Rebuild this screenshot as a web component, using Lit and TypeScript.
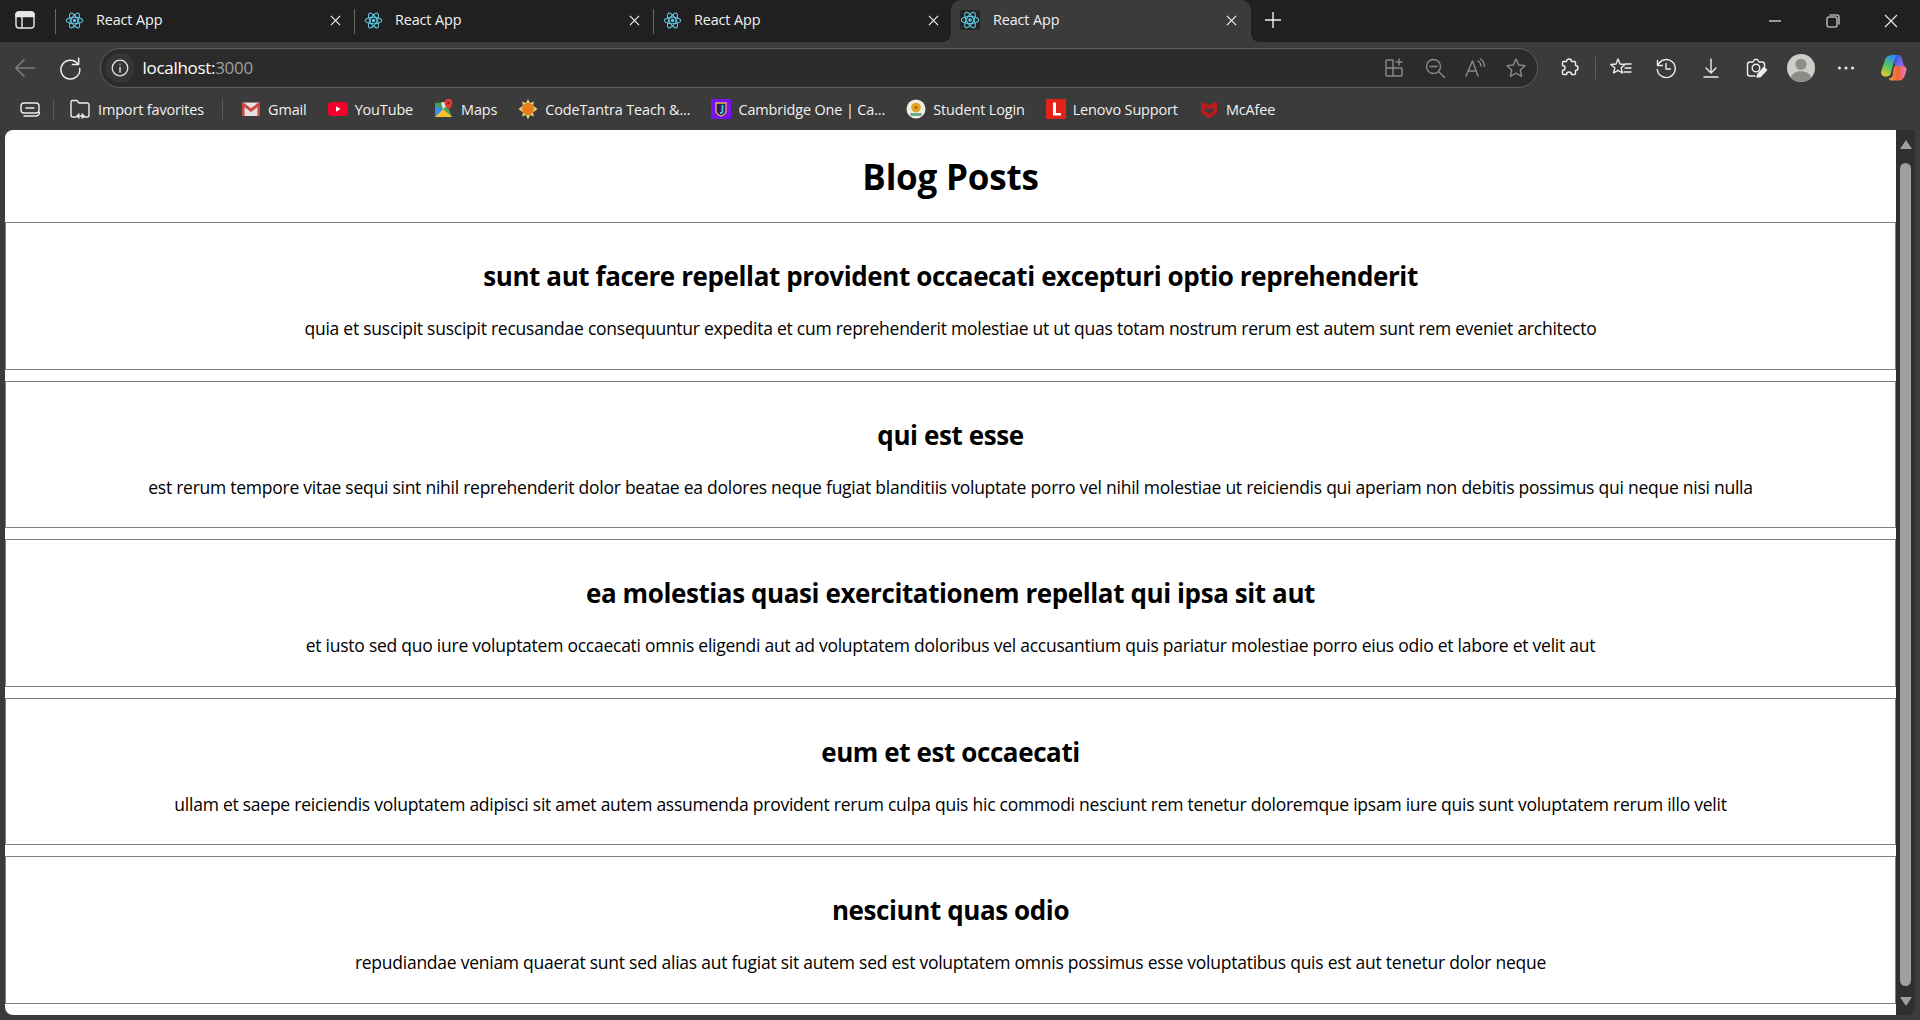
import { LitElement, html, css, svg } from "lit";
import { customElement } from "lit/decorators.js";

const reactIcon = html`<svg class="fav" viewBox="0 0 24 24" fill="none" stroke="#61c8e4" stroke-width="1.3"><circle cx="12" cy="12" r="2.1" fill="#61c8e4" stroke="none"/><ellipse cx="12" cy="12" rx="10.5" ry="4.2"/><ellipse cx="12" cy="12" rx="10.5" ry="4.2" transform="rotate(60 12 12)"/><ellipse cx="12" cy="12" rx="10.5" ry="4.2" transform="rotate(120 12 12)"/></svg>`;

const x = html`<svg class="close" viewBox="0 0 12 12" stroke="#f0f0f0" stroke-width="1.3" fill="none"><path d="M1 1l10 10M11 1L1 11"/></svg>`;

const ic = (body: unknown, stroke = "#e8e8e8", size = 24) =>
  html`<svg width=${size} height=${size} viewBox="0 0 24 24" fill="none" stroke=${stroke} stroke-width="1.4" stroke-linecap="round" stroke-linejoin="round">${body}</svg>`;

const tabs = [0, 1, 2];
const posts = [
  ["sunt aut facere repellat provident occaecati excepturi optio reprehenderit", "quia et suscipit suscipit recusandae consequuntur expedita et cum reprehenderit molestiae ut ut quas totam nostrum rerum est autem sunt rem eveniet architecto"],
  ["qui est esse", "est rerum tempore vitae sequi sint nihil reprehenderit dolor beatae ea dolores neque fugiat blanditiis voluptate porro vel nihil molestiae ut reiciendis qui aperiam non debitis possimus qui neque nisi nulla"],
  ["ea molestias quasi exercitationem repellat qui ipsa sit aut", "et iusto sed quo iure voluptatem occaecati omnis eligendi aut ad voluptatem doloribus vel accusantium quis pariatur molestiae porro eius odio et labore et velit aut"],
  ["eum et est occaecati", "ullam et saepe reiciendis voluptatem adipisci sit amet autem assumenda provident rerum culpa quis hic commodi nesciunt rem tenetur doloremque ipsam iure quis sunt voluptatem rerum illo velit"],
  ["nesciunt quas odio", "repudiandae veniam quaerat sunt sed alias aut fugiat sit autem sed est voluptatem omnis possimus esse voluptatibus quis est aut tenetur dolor neque"],
];

const bookmarks = [
  { label: "Gmail", icon: html`<svg class="bm" viewBox="0 0 20 20"><rect x="1" y="3.500" width="18" height="13.500" rx="1" fill="#e6dfdc"/><path d="M1 4.500V17h2.500V8l6.500 5 6.500-5v9H19V4.500L17.500 3.500 10 9.500 2.500 3.500z" fill="#c9473f"/></svg>` },
  { label: "YouTube", icon: html`<svg class="bm" viewBox="0 0 20 20"><rect x="0" y="3" width="20" height="14" rx="4" fill="#f5002d"/><path d="M8 7.200l4.600 2.800L8 12.800z" fill="#fff"/></svg>` },
  { label: "Maps", icon: html`<svg class="bm" viewBox="0 0 20 20"><path d="M1 4l11-1 6 15-17 0z" fill="#43a855"/><path d="M1 18l8-8 9 8z" fill="#fbc02d"/><path d="M1 7l8 3-8 8z" fill="#4285f4"/><path d="M1 4h6l2 6-8-3z" fill="#3f9f50"/><path d="M7 3.500l5-.5 1 4-4 3z" fill="#e4e4e4"/><path d="M14.500 0a4 4 0 0 1 4 4c0 2.800-4 6.800-4 6.800s-4-4-4-6.800a4 4 0 0 1 4-4z" fill="#de3d34"/><circle cx="14.500" cy="4" r="1.300" fill="#8f1f1a"/></svg>` },
  { label: "CodeTantra Teach &...", icon: html`<svg class="bm" viewBox="0 0 20 20"><path d="M10 0l2 4 4-1.500L15 6.500l4.500 3.500-4.500 3.500 1 4-4-1.500-2 4.500-2-4.500-4 1.500 1-4L.5 10 5 6.500 4 2.500 8 4z" fill="#e2cf7c"/><circle cx="10" cy="10" r="6" fill="#e67e1a"/></svg>` },
  { label: "Cambridge One | Ca...", icon: html`<svg class="bm" viewBox="0 0 20 20"><rect width="20" height="20" fill="#7a12f0"/><path d="M5 4h10v8c0 2.500-2.500 4-5 5-2.500-1-5-2.500-5-5z" fill="#2a2060" stroke="#e9b44a" stroke-width="1.300"/><path d="M11.500 6v6.500c0 1-1 1.500-2.500 1.500" fill="none" stroke="#4fc3e8" stroke-width="1.800"/></svg>` },
  { label: "Student Login", icon: html`<svg class="bm" viewBox="0 0 20 20"><circle cx="10" cy="10" r="9.500" fill="#efeee4"/><circle cx="10" cy="8.500" r="4.800" fill="#e5a323"/><circle cx="10" cy="8.500" r="1.400" fill="#a8641a"/><path d="M4 14h12l-1 3H5z" fill="#6aa88a"/></svg>` },
  { label: "Lenovo Support", icon: html`<svg class="bm" viewBox="0 0 20 20"><rect width="20" height="20" fill="#e2231a"/><path d="M7 3.500h3V14h5v2.500H7z" fill="#fff"/></svg>` },
  { label: "McAfee", icon: html`<svg class="bm" viewBox="0 0 20 20"><path d="M2 2.500l8 3.500 8-3.500V14l-8 5.500L2 14z" fill="#b71c1c"/><path d="M6 8.500l4 2 4-2v3.500l-4 2.500L6 12z" fill="#3b3b3b"/></svg>` },
];

@customElement("app-root")
export class AppRoot extends LitElement {
  static styles = css`
    :host { display: flex; flex-direction: column; width: 1920px; height: 1020px; overflow: hidden; background: #3b3b3b; font-family: "Open Sans", "Noto Sans", sans-serif; color: #f2f2f2; }
    .strip { height: 42px; background: #202020; display: flex; flex: none; position: relative; }
    .panel { width: 50px; display: flex; align-items: center; justify-content: center; flex: none; margin-top: -2px; }
    .tab { width: 299px; height: 42px; box-sizing: border-box; display: flex; align-items: center; position: relative; padding-left: 10px; flex: none; }
    .tab.sep::before { content: ""; position: absolute; left: 5px; top: 9px; height: 25px; width: 1px; background: #6a6a6a; }
    .tab.active { background: #3b3b3b; border-radius: 10px 10px 0 0; width: 300px; margin-left: 4px; padding-left: 4px; }
    .tab.active::before, .tab.active::after { content: ""; position: absolute; bottom: 0; width: 8px; height: 8px; background: radial-gradient(circle at 0 0, #202020 7.5px, #3b3b3b 8px); }
    .tab.active::before { left: -8px; }
    .tab.active::after { right: -8px; background: radial-gradient(circle at 100% 0, #202020 7.5px, #3b3b3b 8px); }
    .fav { width: 19px; height: 19px; flex: none; margin-left: 5px; margin-top: -2px; }
    .tab.active .fav { background: #252525; width: 20px; height: 20px; border-radius: 2px; }
    .title { font-size: 14.400px; margin-left: 12px; flex: 1; letter-spacing: -0.12px; margin-top: -3px; }
    .tab.active .title { margin-left: 13px; }
    .close { width: 11px; height: 11px; position: absolute; left: 280px; top: 15px; }
    .tab.active .close { left: 275px; }
    .plus { width: 42px; display: flex; align-items: center; justify-content: center; margin-left: 1px; margin-top: -2px; }
    .winctl { position: absolute; right: 0; top: 0; display: flex; height: 42px; }
    .winctl div { width: 58px; display: flex; align-items: center; justify-content: center; }

    .toolbar { height: 46px; flex: none; display: flex; align-items: center; position: relative; }
    .omni { width: 1438px; height: 40px; margin-top: 6px; margin-left: 9px; box-sizing: border-box; border: 1.500px solid #5e5e5e; border-radius: 20px; background: #2b2b2b; display: flex; align-items: center; padding-left: 3.500px; flex: none; }
    .info { width: 30px; height: 30px; border-radius: 50%; background: #353535; display: flex; align-items: center; justify-content: center; flex: none; }
    .url { font-size: 17px; margin-left: 8px; letter-spacing: -0.3px; flex: 1; color: #fff; margin-top: -2px; }
    .url span { color: #a0a0a0; }
    .omni-icons { display: flex; gap: 16.500px; padding-right: 9.500px; }
    .nav-row { display: flex; align-items: center; margin-top: 6px; height: 40px; }
    .back { width: 49px; display: flex; justify-content: center; flex: none; }
    .reload { width: 42px; display: flex; justify-content: center; flex: none; }
    .tools { display: flex; align-items: center; margin-top: 6px; margin-left: 19px; }
    .tools > * { flex: none; }
    .t-sep { width: 1px; height: 22px; background: #5e5e5e; margin: 0 13px 0 13.500px; }
    .t-gap { margin-left: 21px; display: flex; }
    .avatar { margin-left: 19px; }
    .dots { margin-left: 22px; }
    .copilot { margin-left: 25px; }

    .bar { height: 42px; flex: none; display: flex; align-items: center; padding-left: 18px; font-size: 14.450px; letter-spacing: -0.13px; }
    .bar-sep { width: 1px; height: 20px; background: #5a5a5a; flex: none; }
    .bar-sep.start { margin-left: 11px; }
    .import { display: flex; align-items: center; gap: 6px; margin: 0 18px 0 14px; }
    .bmk { display: flex; align-items: center; gap: 7px; margin-right: 21px; white-space: nowrap; }
    .bm { width: 20px; height: 20px; flex: none; }
    .first { margin-left: 18px; }

    .main { flex: none; height: 885px; display: flex; margin-left: 5px; position: relative; }
    .page { width: 1891px; height: 885px; flex: none; background: #fff; color: #000; border-radius: 8px 0 0 8px; overflow: hidden; text-align: center; }
    h1 { margin: 0; height: 92px; box-sizing: border-box; padding-top: 24px; font-size: 35px; line-height: 46px; font-weight: 700; letter-spacing: -0.2px; }
    .post { border: 1px solid #808080; height: 147.500px; box-sizing: border-box; margin-bottom: 11px; }
    h2 { margin: 0; padding-top: 35px; font-size: 26px; line-height: 36px; font-weight: 700; letter-spacing: -0.4px; }
    p { margin: 22px 0 0; font-size: 17.500px; line-height: 24px; letter-spacing: -0.25px; }
    .scroll { width: 19px; height: 885px; flex: none; background: #2f2f2f; border-radius: 0 0 8px 0; display: flex; flex-direction: column; align-items: center; box-sizing: border-box; padding-top: 10px; }
    .arrow { width: 0; height: 0; border-left: 6px solid transparent; border-right: 6px solid transparent; flex: none; }
    .arrow.up { border-bottom: 9px solid #9f9f9f; }
    .arrow.down { border-top: 9px solid #9f9f9f; margin-top: 11px; }
    .thumb { width: 11px; height: 823px; background: #9f9f9f; border-radius: 6px; margin-top: 14px; flex: none; }
  `;

  render() {
    return html`
      <div class="strip">
        <div class="panel">${ic(svg`<rect x="3" y="4" width="18" height="16" rx="3"/><path d="M9 8.500V20"/><path d="M6 4h12a3 3 0 0 1 3 3v1.500H3V7a3 3 0 0 1 3-3z" fill="#e8e8e8"/>`, "#e8e8e8", 24)}</div>
        ${tabs.map(() => html`<div class="tab sep">${reactIcon}<span class="title">React App</span>${x}</div>`)}
        <div class="tab active">${reactIcon}<span class="title">React App</span>${x}</div>
        <div class="plus"><svg width="18" height="18" viewBox="0 0 18 18" stroke="#f0f0f0" stroke-width="1.400"><path d="M9 1v16M1 9h16"/></svg></div>
        <div class="winctl">
          <div><svg width="14" height="14" viewBox="0 0 14 14" stroke="#eee" stroke-width="1.200"><path d="M1 7h12"/></svg></div>
          <div><svg width="14" height="14" viewBox="0 0 14 14" stroke="#eee" stroke-width="1.100" fill="none"><rect x="1" y="3" width="10" height="10" rx="1.500"/><path d="M3.500 1h8a1.500 1.500 0 0 1 1.500 1.500v8"/></svg></div>
          <div><svg width="14" height="14" viewBox="0 0 14 14" stroke="#eee" stroke-width="1.100"><path d="M1 1l12 12M13 1L1 13"/></svg></div>
        </div>
      </div>

      <div class="toolbar">
        <div class="nav-row">
          <div class="back">${ic(svg`<path d="M21 12H3.500M11 4.500L3.500 12l7.500 7.500"/>`, "#7d7d7d", 26)}</div>
          <div class="reload">${ic(svg`<path d="M19.500 8.500A8.700 8.700 0 1 0 21 12.500M20 3v5.800h-5.800"/>`, "#ededed", 26)}</div>
        </div>
        <div class="omni">
          <div class="info">${ic(svg`<circle cx="12" cy="12" r="8.500"/><path d="M12 11v5.500M12 7.700v.3"/>`, "#e8e8e8", 22)}</div>
          <div class="url">localhost:<span>3000</span></div>
          <div class="omni-icons">
            ${ic(svg`<path d="M11 4H5a1 1 0 0 0-1 1v14a1 1 0 0 0 1 1h14a1 1 0 0 0 1-1v-7H4M11 4v16M17 3v6M14 6h6"/>`, "#8a8a8a", 24)}
            ${ic(svg`<circle cx="10.500" cy="10.500" r="7"/><path d="M7 10.500h7M15.500 15.500l6 6"/>`, "#8a8a8a", 24)}
            ${ic(svg`<path d="M3 20L9.500 5l5.500 15M5.500 15h8M15 5a6 6 0 0 1 3 5M17.500 3a9 9 0 0 1 4 7.500"/>`, "#8a8a8a", 24)}
            ${ic(svg`<path d="M12 3l2.700 6 6.300.7-4.700 4.300 1.300 6.500-5.600-3.300-5.600 3.300L7.700 14 3 9.700 9.300 9z"/>`, "#8a8a8a", 24)}
          </div>
        </div>
        <div class="tools">
          ${ic(svg`<path d="M6.500 6h3a2.500 2.500 0 0 1 5 0h3a1 1 0 0 1 1 1v3a2.500 2.500 0 0 1 0 5v3a1 1 0 0 1-1 1h-3a2.500 2.500 0 0 0-5 0h-3a1 1 0 0 1-1-1v-3a2.500 2.500 0 0 0 0-5V7a1 1 0 0 1 1-1z" transform="translate(0 -.5)"/>`, "#ededed", 24)}
          <div class="t-sep"></div>
          ${ic(svg`<path d="M9 3l2 5 5 .5-3.800 3.300 1.200 5.200-4.400-2.700-4.400 2.700 1.200-5.200L1.800 8.500 7 8zM16 8h6M16 12h6M15 16h7"/>`, "#ededed", 24)}
          <span class="t-gap">${ic(svg`<path d="M3.500 4.500v5h5M4 9a9 9 0 1 1-.7 4.500M12 7.500V13h4.500"/>`, "#ededed", 24)}</span>
          <span class="t-gap">${ic(svg`<path d="M12 3v14M7 12l5 5 5-5M5 21h14"/>`, "#ededed", 24)}</span>
          <span class="t-gap">${ic(svg`<path d="M9 6l1.500-2.500h3L15 6h3a2.500 2.500 0 0 1 2.500 2.500V11M11 20H6a2.500 2.500 0 0 1-2.500-2.500v-9A2.500 2.500 0 0 1 6 6h3"/><circle cx="12" cy="12" r="3.800"/><path d="M13 21l1-3 6-6.500 2.500 2.500-6 6.500z" fill="#ededed"/>`, "#ededed", 24)}</span>
          <svg class="avatar" width="28" height="28" viewBox="0 0 30 30"><circle cx="15" cy="15" r="15" fill="#cfcdc8"/><circle cx="15" cy="11" r="6" fill="#8e8c88"/><path d="M4 25c2-5 7-6.500 11-6.500S24 20 26 25a15 15 0 0 1-22 0z" fill="#8e8c88"/></svg>
          <svg class="dots" width="18" height="6" viewBox="0 0 18 6" fill="#ededed"><circle cx="2.500" cy="3" r="1.500"/><circle cx="9" cy="3" r="1.500"/><circle cx="15.500" cy="3" r="1.500"/></svg>
          <svg class="copilot" width="28" height="28" viewBox="0 0 30 30">
            <defs>
              <linearGradient id="cA" x1="0.600" y1="0" x2="0.200" y2="1"><stop offset="0" stop-color="#2a8cf0"/><stop offset=".55" stop-color="#56c85a"/><stop offset="1" stop-color="#f4c430"/></linearGradient>
              <linearGradient id="cB" x1="0" y1="0" x2="1" y2="1"><stop offset="0" stop-color="#1a4fd0"/><stop offset=".6" stop-color="#8a6cf0"/><stop offset="1" stop-color="#d66ae0"/></linearGradient>
              <linearGradient id="cC" x1="0" y1="0" x2="1" y2="0"><stop offset="0" stop-color="#f6a040"/><stop offset=".5" stop-color="#f2603a"/><stop offset="1" stop-color="#ea7ab8"/></linearGradient>
            </defs>
            <path d="M14 1h5c3 0 4 2 4.500 4l3 12c.5 3-1 5-3.500 5h-5z" fill="url(#cB)"/>
            <path d="M10 2c1-1 2-1 3-1h6c-2 1-3 3-3.500 5L11.500 21c-.5 2-2 3-4 3H5c-3 0-4.500-3-3.500-6l4-12C6 4 8 2 10 2z" fill="url(#cA)"/>
            <path d="M15 13h10c3 0 4 3 3 5.500-1 5-3.500 10-7 10h-8c-2 0-3.500-1-3.500-2.500 2 0 3.500-1 4-3z" fill="url(#cC)"/>
          </svg>
        </div>
      </div>

      <div class="bar">
        ${ic(svg`<rect x="3" y="6" width="18" height="10" rx="3"/><path d="M8 11h8"/><path d="M6 19h12a3.500 3.500 0 0 0 3.500-3.500" />`, "#ededed", 24)}
        <div class="bar-sep start"></div>
        <div class="import">
          ${ic(svg`<path d="M8 20H5a2 2 0 0 1-2-2V5a1.500 1.500 0 0 1 1.500-1.500H9L11 6h8a2 2 0 0 1 2 2v10a2 2 0 0 1-2 2h-3M9 19h7M11 17l-2 2 2 2M14 17l2 2-2 2"/>`, "#ededed", 24)}
          <span>Import favorites</span>
        </div>
        <div class="bar-sep"></div>
        ${bookmarks.map((b, i) => html`<div class="bmk ${i === 0 ? "first" : ""}">${b.icon}<span>${b.label}</span></div>`)}
      </div>

      <div class="main">
        <div class="page">
          <h1>Blog Posts</h1>
          ${posts.map(([t, b]) => html`<div class="post"><h2>${t}</h2><p>${b}</p></div>`)}
        </div>
        <div class="scroll">
          <div class="arrow up"></div>
          <div class="thumb"></div>
          <div class="arrow down"></div>
        </div>
      </div>
    `;
  }
}
